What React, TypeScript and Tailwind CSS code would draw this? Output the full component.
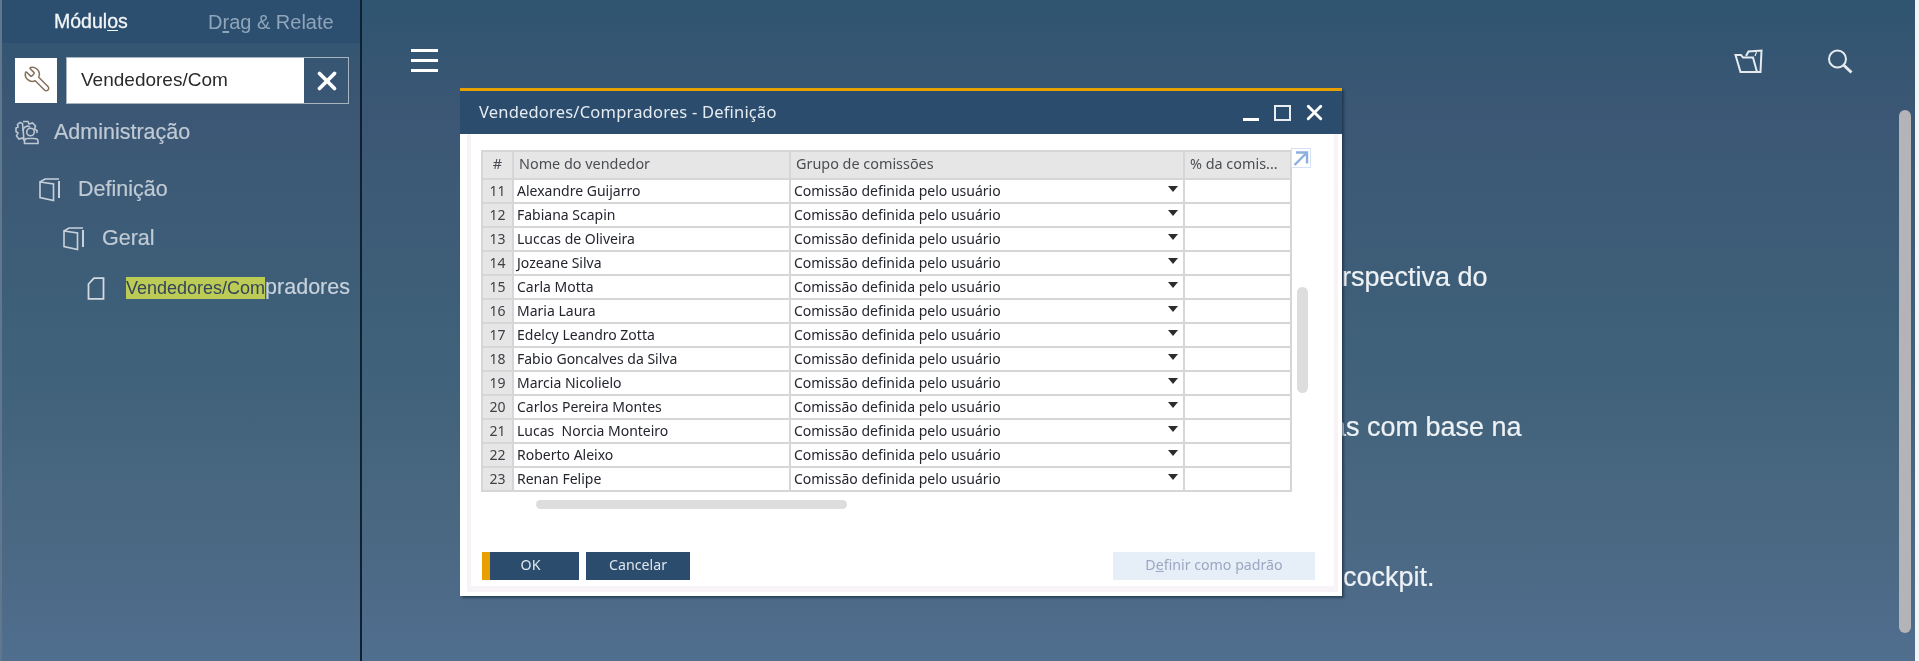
import { Wrench, X } from "lucide-react";

const rows = [
  ["11", "Alexandre Guijarro"],
  ["12", "Fabiana Scapin"],
  ["13", "Luccas de Oliveira"],
  ["14", "Jozeane Silva"],
  ["15", "Carla Motta"],
  ["16", "Maria Laura"],
  ["17", "Edelcy Leandro Zotta"],
  ["18", "Fabio Goncalves da Silva"],
  ["19", "Marcia Nicolielo"],
  ["20", "Carlos Pereira Montes"],
  ["21", "Lucas  Norcia Monteiro"],
  ["22", "Roberto Aleixo"],
  ["23", "Renan Felipe"],
];

function BookIcon() {
  return (
    <svg width="22" height="24" viewBox="0 0 22 24" fill="none" stroke="#c9d2da" strokeWidth="1.6" className="shrink-0">
      <path d="M1 4 L14.5 6 V22.5 L1 19.5 Z" />
      <path d="M1 4 L6 1 H20" />
      <path d="M20 3 V20" strokeWidth="2" />
    </svg>
  );
}

function PageIcon() {
  return (
    <svg width="18" height="23" viewBox="0 0 18 23" fill="none" stroke="#d3dae0" strokeWidth="1.8" className="shrink-0">
      <path d="M1.5 7 L7 1.2 H16.5 V21.8 H1.5 Z" />
    </svg>
  );
}

function AdminIcon() {
  return (
    <svg width="25" height="25" viewBox="0 0 25 25" fill="none" stroke="#bcc7d1" strokeWidth="1.6" className="shrink-0">
      <path d="M8 1.5 H13 L14 4 L17.5 3 L20.5 6 L19.5 9 L22 10.5 V13 M9 20 L7.5 18 L4 19 L1.5 16 L3 13 L1 11.5 V8 L3 7 L2.5 4.5 L5 2.5 L7.5 3.5 Z" />
      <path d="M8 11 A4.5 4.5 0 0 1 15 7" />
      <circle cx="15.5" cy="12" r="3.8" />
      <path d="M9.5 23.5 V21 Q9.5 18.5 12.5 18.5 H19 Q23 18.5 23 21 V23.5 Z" />
    </svg>
  );
}

function FolderIcon() {
  return (
    <svg width="29" height="25" viewBox="0 0 29 25" fill="none" stroke="#e6ebef" strokeWidth="2" className="shrink-0">
      <path d="M1.5 6 H7 L9 8.5 H19 L23 23 H6.5 Z" />
      <path d="M12 7 L14.5 2.5 L27.5 1.5 L26.5 23 H22.5" />
      <path d="M21 7 L22.5 3" strokeWidth="1.2" />
    </svg>
  );
}

function SearchIcon() {
  return (
    <svg width="26" height="25" viewBox="0 0 26 25" fill="none" stroke="#e6ebef" className="shrink-0">
      <circle cx="10.5" cy="10" r="8.5" strokeWidth="2" />
      <path d="M16.5 16 L24.5 23.5" strokeWidth="3" />
    </svg>
  );
}

function ExpandIcon() {
  return (
    <div className="absolute left-[1px] top-[-2px] flex h-[20px] w-[20px] items-center justify-center border border-[#d4e2f3] bg-white">
      <svg width="16" height="15" viewBox="0 0 16 15" fill="none" stroke="#8cb0de" strokeWidth="2.4">
        <path d="M3 1.5 H14 V12.5" />
        <path d="M13.5 2 L1.5 14" />
      </svg>
    </div>
  );
}

function Sidebar() {
  return (
    <aside className="flex h-full w-[362px] shrink-0 flex-col border-r-2 border-l-2 border-r-[#10202e] border-l-[#5f7890] font-['Liberation_Sans',sans-serif]">
      <div className="flex h-[43px] items-center bg-[#2c4e6f] text-[19.5px] leading-none">
        <div className="w-[177px] pl-[52px] text-[#f3f6f8] [-webkit-text-stroke:0.3px_#f3f6f8]">
          Módul<span className="underline underline-offset-2">o</span>s
        </div>
        <div className="pl-[29px] text-[20px] text-[#8fa5ba]">
          D<span className="underline underline-offset-2">r</span>ag &amp; Relate
        </div>
      </div>
      <div className="flex items-start pt-[14px] pl-[13px]">
        <div className="mt-[1px] flex h-[45px] w-[42px] items-center justify-center bg-white pb-[3px] pl-[2px]">
          <Wrench size={28} strokeWidth={1.3} color="#86725c" className="-scale-x-100" />
        </div>
        <div className="ml-[9px] flex h-[47px] w-[283px] border border-[#a8b4c0]">
          <div className="flex flex-1 items-center bg-white pl-[14px] text-[19px] text-[#2b2b2b]">Vendedores/Com</div>
          <div className="flex w-[44px] items-center justify-center pl-[2px]">
            <X size={30} strokeWidth={3} color="#ffffff" />
          </div>
        </div>
      </div>
      <div className="text-[21.5px] leading-none text-[#bfcad4] [-webkit-text-stroke:0.2px_#bfcad4]">
        <div className="mt-[15px] flex h-[27px] items-center gap-[14px] pl-[13px]">
          <AdminIcon />
          <span>Administração</span>
        </div>
        <div className="mt-[32px] flex h-[24px] items-center gap-[17px] pl-[37px]">
          <BookIcon />
          <span>Definição</span>
        </div>
        <div className="mt-[25px] flex h-[24px] items-center gap-[17px] pl-[61px]">
          <BookIcon />
          <span>Geral</span>
        </div>
        <div className="mt-[25px] flex h-[24px] items-center gap-[21px] pl-[85px]">
          <PageIcon />
          <span className="whitespace-nowrap text-[21.5px] text-[#c9d3dc]">
            <span className="bg-[#bccb55] py-[1px] text-[18px] text-[#34455a] [-webkit-text-stroke:0]">Vendedores/Com</span>pradores
          </span>
        </div>
      </div>
    </aside>
  );
}

function Dialog() {
  return (
    <div className="absolute left-[98px] top-[88px] flex h-[508px] w-[882px] flex-col border-t-[3px] border-[#e8a000] font-['Noto_Sans',sans-serif] shadow-[2px_2px_2px_rgba(20,40,60,0.6)]">
      <div className="flex h-[43px] shrink-0 items-center justify-between bg-[#2b4c6d] pr-[15px] pl-[19px]">
        <span className="text-[16.5px] tracking-[0.2px] text-[#e4ebf1]">Vendedores/Compradores - Definição</span>
        <div className="flex items-center">
          <div className="mt-[13px] h-[3px] w-[16px] bg-white" />
          <div className="ml-[15px] h-[16px] w-[17px] border-2 border-[#e8edf2]" />
          <X size={25} strokeWidth={2.8} color="#ffffff" className="ml-[11px]" />
        </div>
      </div>
      <div className="flex min-h-0 flex-1 flex-col bg-white pr-[4px] pb-[4px] pl-[7px]">
        <div className="flex min-h-0 flex-1 flex-col bg-[#f7f3f6] px-[4px] pb-[6px]">
          <div className="relative flex min-h-0 flex-1 flex-col bg-white pt-[16px] pl-[11px]">
            <div className="relative -ml-[1px]">
              <table className="w-[809px] table-fixed border-collapse text-[14px] leading-none text-[#23262e]">
                <colgroup>
                  <col className="w-[31px]" />
                  <col className="w-[277px]" />
                  <col className="w-[394px]" />
                  <col className="w-[107px]" />
                </colgroup>
                <thead>
                  <tr className="h-[28px] bg-[#e6e6e6] text-[14.4px] text-[#4a4d52]">
                    <th className="border-2 border-[#d6d6d6] pb-[2px] text-center font-normal">#</th>
                    <th className="border-2 border-[#d6d6d6] pb-[2px] pl-[5px] text-left font-normal">Nome do vendedor</th>
                    <th className="border-2 border-[#d6d6d6] pb-[2px] pl-[5px] text-left font-normal">Grupo de comissões</th>
                    <th className="truncate border-2 border-[#d6d6d6] pb-[2px] pl-[5px] text-left font-normal">% da comis...</th>
                  </tr>
                </thead>
                <tbody>
                  {rows.map(([num, name]) => (
                    <tr key={num} className="h-[24px]">
                      <td className="border-2 border-[#d6d6d6] bg-[#e6e6e6] text-center text-[#3d4047]">{num}</td>
                      <td className="border-2 border-[#d6d6d6] pl-[3px] whitespace-pre">{name}</td>
                      <td className="border-2 border-[#d6d6d6] pl-[3px]">
                        <div className="flex items-center justify-between pr-[5px]">
                          <span>Comissão definida pelo usuário</span>
                          <span className="mb-[4px] h-0 w-0 border-x-[5.5px] border-t-[6px] border-x-transparent border-t-[#2c2c30]" />
                        </div>
                      </td>
                      <td className="border-2 border-[#d6d6d6]" />
                    </tr>
                  ))}
                </tbody>
              </table>
              <div className="absolute left-[809px] top-0">
                <ExpandIcon />
              </div>
              <div className="absolute left-[816px] top-[137px] h-[106px] w-[11px] rounded-full bg-[#dddddd]" />
              <div className="mt-[8px] ml-[55px] h-[9px] w-[311px] rounded-full bg-[#dddddd]" />
            </div>
            <div className="mt-auto flex h-[28px] items-center text-[14.2px]">
              <button className="flex h-full w-[97px] items-center justify-center border-l-[8px] border-[#e8a000] bg-[#2b4c6d] pr-[8px] pb-[3px] text-[#dfe7ee]">OK</button>
              <button className="ml-[7px] flex h-full w-[104px] items-center justify-center bg-[#2b4c6d] pb-[3px] text-[#dfe7ee]">Cancelar</button>
              <button className="ml-[423px] flex h-full w-[202px] items-center justify-center bg-[#e6eff7] pb-[3px] text-[#9aa7c2]">
                D<span className="underline">e</span>finir como padrão
              </button>
            </div>
            <div className="h-[6px] shrink-0" />
          </div>
        </div>
      </div>
    </div>
  );
}

export default function App() {
  return (
    <div className="flex h-[661px] w-full overflow-hidden bg-[linear-gradient(180deg,#2f5570_0%,#3c5775_18%,#3e6079_50%,#4a6882_80%,#506e8e_100%)] blur-[0.5px]">
      <Sidebar />
      <main className="relative flex h-full flex-1 flex-col">
        <header className="flex items-start pt-[49px] pl-[49px]">
          <div className="flex w-[27px] flex-col gap-[7px]">
            <div className="h-[3px] bg-white" />
            <div className="h-[3px] bg-white" />
            <div className="h-[3px] bg-white" />
          </div>
          <div className="ml-auto flex items-center gap-[64px] pr-[66px]">
            <FolderIcon />
            <SearchIcon />
          </div>
        </header>
        <div className="flex flex-col items-start gap-[119px] pt-[188px] font-['Liberation_Sans',sans-serif] text-[27px] leading-[31px] text-[#eef2f5] [-webkit-text-stroke:0.2px_#eef2f5]">
          <p className="ml-[950px]">perspectiva do</p>
          <p className="ml-[969px]">as com base na</p>
          <p className="ml-[981px]">cockpit.</p>
        </div>
        <div className="absolute left-[1537px] top-[110px] h-[523px] w-[12px] rounded-full bg-[#b3b3b8]" />
        <div className="absolute right-0 top-0 h-full w-[4px] bg-[#f4f4f6]" />
        <Dialog />
      </main>
    </div>
  );
}
